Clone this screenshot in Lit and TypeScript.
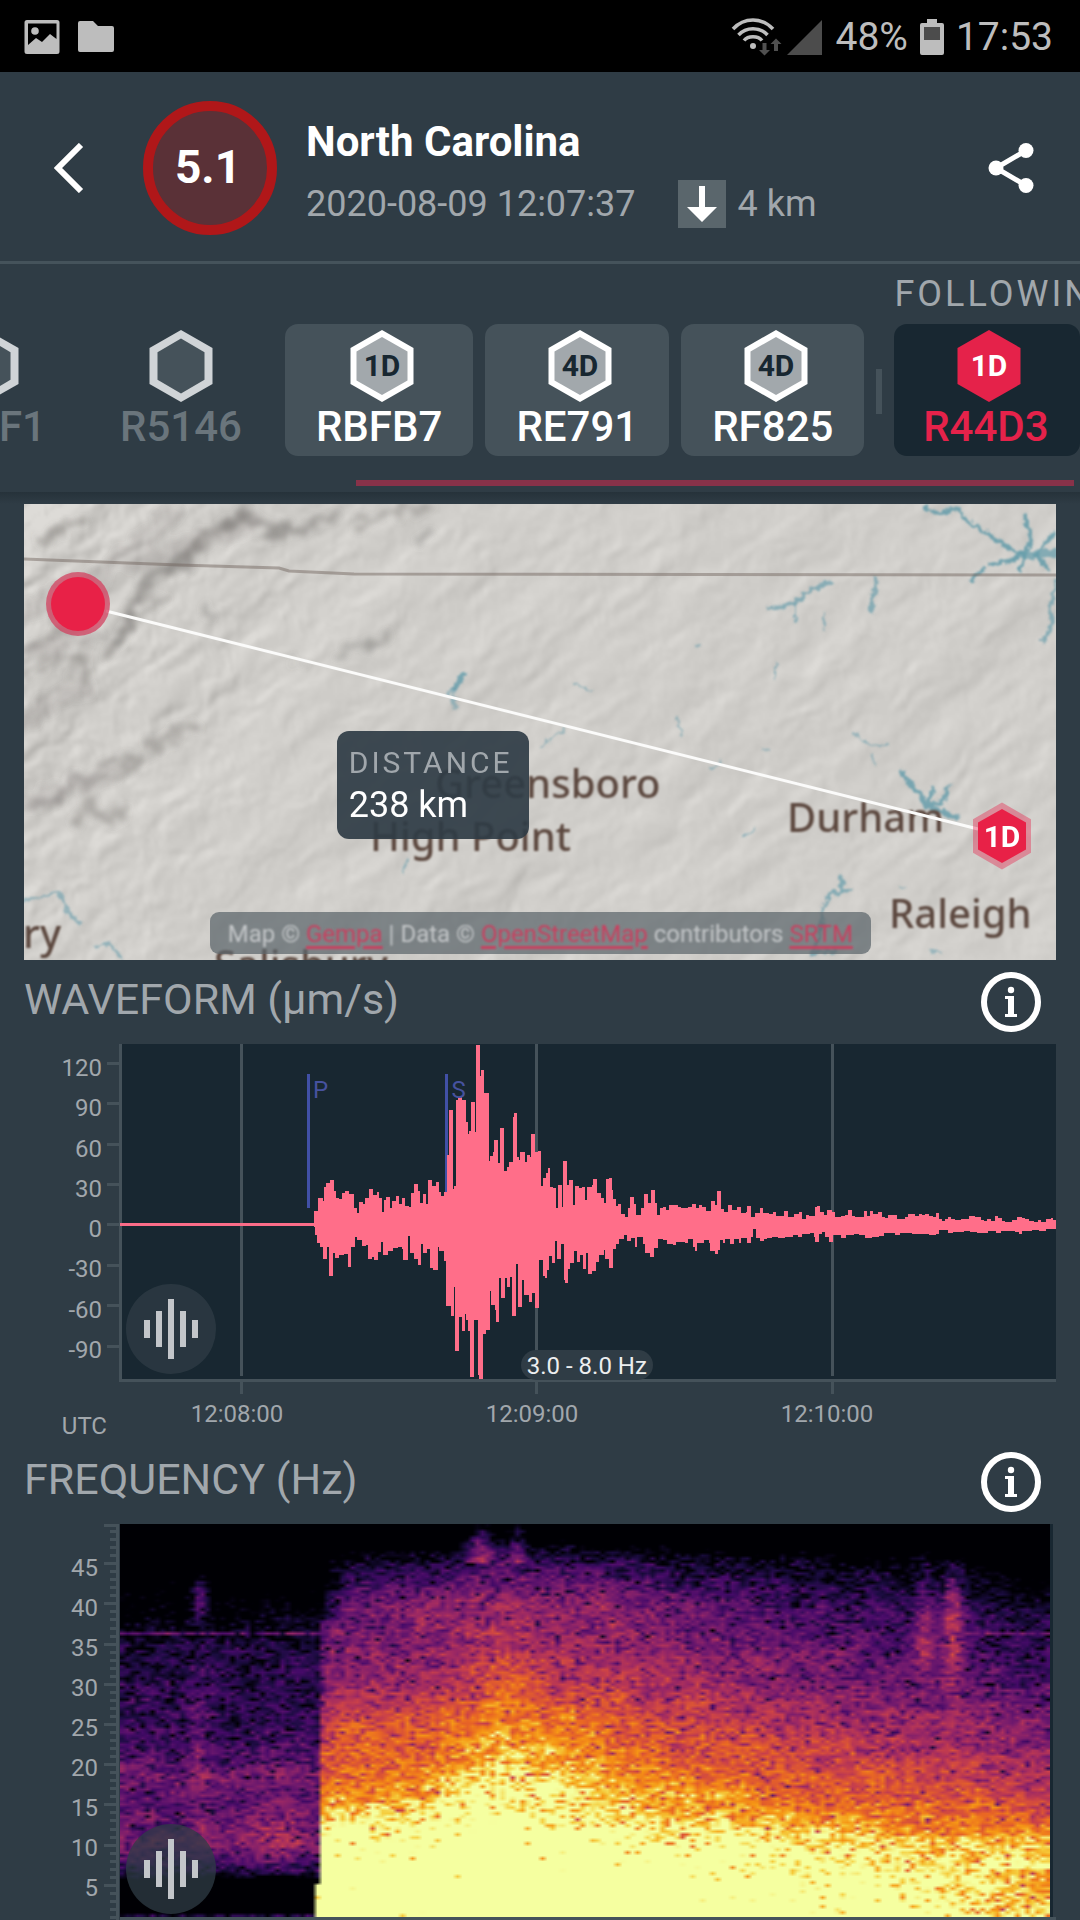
import { LitElement, html, svg, css } from "lit";
import { customElement } from "lit/decorators.js";

/* ---------- helpers ---------- */

const createRandom = (seed: number) => () => {
  seed = (seed + 0x6d2b79f5) | 0;
  let t = Math.imul(seed ^ (seed >>> 15), 1 | seed);
  t = (t + Math.imul(t ^ (t >>> 7), 61 | t)) ^ t;
  return ((t ^ (t >>> 14)) >>> 0) / 4294967296;
};

const hash = (x: number, y: number) => {
  let h = (Math.imul(x, 374761393) + Math.imul(y, 668265263)) | 0;
  h = Math.imul(h ^ (h >>> 13), 1274126177);
  return ((h ^ (h >>> 16)) >>> 0) / 4294967296;
};

const smoothNoise = (x: number, y: number) => {
  const xi = Math.floor(x);
  const yi = Math.floor(y);
  const fx = x - xi;
  const fy = y - yi;
  const ux = fx * fx * (3 - 2 * fx);
  const uy = fy * fy * (3 - 2 * fy);
  const a = hash(xi, yi);
  const b = hash(xi + 1, yi);
  const c = hash(xi, yi + 1);
  const d = hash(xi + 1, yi + 1);
  return (a + (b - a) * ux) * (1 - uy) + (c + (d - c) * ux) * uy;
};

const bump = (distance: number, width: number) => Math.exp(-((distance / width) ** 2));

const hexagon = (cx: number, cy: number, w: number, h: number) =>
  [
    [cx, cy - h / 2],
    [cx + w / 2, cy - h / 4],
    [cx + w / 2, cy + h / 4],
    [cx, cy + h / 2],
    [cx - w / 2, cy + h / 4],
    [cx - w / 2, cy - h / 4],
  ]
    .map((p) => p.join(","))
    .join(" ");

/* ---------- hill-shaded terrain ---------- */

@customElement("terrain-layer")
class TerrainLayer extends LitElement {
  static styles = css`
    :host {
      display: block;
    }
    .surface {
      display: block;
      width: 100%;
      height: 100%;
    }
  `;

  firstUpdated() {
    const canvas = this.renderRoot.querySelector("canvas")!;
    const { width: w, height: h } = canvas;
    const ctx = canvas.getContext("2d")!;
    const image = ctx.createImageData(w, h);
    const height = (x0: number, y0: number) => {
      const x = x0 + smoothNoise(x0 / 14 + 5, y0 / 14) * 5;
      const y = y0 + smoothNoise(x0 / 14, y0 / 14 + 31) * 5;
      const u = x * 0.8 - y * 0.6;
      const v = x * 0.6 + y * 0.8;
      return (
        smoothNoise(u / 70, v / 26) * 16 +
        smoothNoise(u / 30 + 3, v / 11 + 7) * 9 +
        smoothNoise(u / 14 + 43, v / 5 + 17) * 5 +
        smoothNoise(x / 5 + 80, y / 6) * 3.2 +
        smoothNoise(x / 2.6, y / 3 + 60) * 1.5
      );
    };
    for (let y = 0; y < h; y++) {
      for (let x = 0; x < w; x++) {
        const relief = 2.2 + 3.4 * Math.max(0, 1 - x / 200 - y / 500);
        const slope = height(x + 1, y + 1) - height(x - 1, y - 1);
        const shade = Math.max(-70, Math.min(13, slope * relief));
        const i = (y * w + x) * 4;
        image.data[i] = 208 + shade;
        image.data[i + 1] = 206 + shade;
        image.data[i + 2] = 202 + shade;
        image.data[i + 3] = 255;
      }
    }
    ctx.putImageData(image, 0, 0);
  }

  render() {
    return html`<canvas class="surface" width="516" height="228"></canvas>`;
  }
}

/* ---------- spectrogram ---------- */

const PALETTE: [number, number, number, number][] = [
  [0, 0, 0, 4],
  [0.13, 27, 12, 65],
  [0.25, 70, 10, 105],
  [0.38, 115, 27, 110],
  [0.5, 160, 42, 99],
  [0.63, 203, 65, 73],
  [0.75, 233, 102, 36],
  [0.86, 246, 150, 20],
  [0.94, 245, 205, 60],
  [1, 245, 255, 160],
];

const paint = (v: number) => {
  const value = Math.max(0, Math.min(1, v));
  let k = 1;
  while (PALETTE[k][0] < value) k++;
  const [p0, ...a] = PALETTE[k - 1];
  const [p1, ...b] = PALETTE[k];
  const t = (value - p0) / (p1 - p0);
  return a.map((c, i) => c + (b[i] - c) * t);
};

/* Signal level every 5 Hz from 0 to 50, at a position along the time axis. */
const QUIET = [-0.15, 0.0, 0.42, 0.34, 0.32, 0.21, 0.19, 0.12, -0.04, -0.22, -0.4];
const PROFILES: { at: number; levels: number[] }[] = [
  { at: 0.21, levels: [1.35, 1.3, 1.12, 0.91, 0.77, 0.68, 0.47, 0.4, 0.34, 0.12, -0.4] },
  { at: 0.32, levels: [1.35, 1.35, 1.16, 0.97, 0.82, 0.75, 0.52, 0.45, 0.43, 0.18, -0.4] },
  { at: 0.41, levels: [1.5, 1.45, 1.3, 1.12, 0.98, 0.89, 0.72, 0.57, 0.52, 0.28, -0.2] },
  { at: 0.52, levels: [1.5, 1.35, 1.16, 0.97, 0.87, 0.76, 0.6, 0.5, 0.44, 0.2, -0.4] },
  { at: 0.68, levels: [1.35, 1.2, 1.07, 0.85, 0.71, 0.62, 0.48, 0.39, 0.3, 0.08, -0.4] },
  { at: 0.84, levels: [1.25, 1.14, 0.98, 0.77, 0.62, 0.52, 0.38, 0.29, 0.2, -0.02, -0.4] },
  { at: 1, levels: [1.1, 1.06, 0.93, 0.67, 0.52, 0.42, 0.28, 0.18, 0.08, -0.12, -0.45] },
];

const sampleLevels = (levels: number[], hz: number) => {
  const k = Math.min(9, Math.floor(hz / 5));
  return levels[k] + (levels[k + 1] - levels[k]) * (hz / 5 - k);
};

@customElement("spectrogram-plot")
class SpectrogramPlot extends LitElement {
  static styles = css`
    :host {
      display: block;
    }
    .surface {
      display: block;
      width: 100%;
      height: 100%;
    }
  `;

  firstUpdated() {
    const canvas = this.renderRoot.querySelector("canvas")!;
    const { width: w, height: h } = canvas;
    const ctx = canvas.getContext("2d")!;
    const image = ctx.createImageData(w, h);
    const random = createRandom(51);
    for (let y = 0; y < h; y++) {
      const hz = 49.8 - (y / h) * 48.8;
      for (let x = 0; x < w; x++) {
        const t = x / w;
        const arrival = 0.209 + Math.min(0.006, Math.max(0, hz - 4) * 0.0005);
        let level: number;
        if (t < arrival) {
          level = sampleLevels(QUIET, hz);
          if (hz < 7) level -= (7 - hz) * 0.12;
          if (hz < 1.4) level = 0.15;
          level += 0.1 * bump(hz - 18.6, 0.9);
          if (hz > 10) level += 0.16 * bump(t - 0.083, 0.013) * bump(hz - 22, 9);
          level += 0.42 * bump(t - 0.083, 0.009) * bump(hz - 41, 2.6);
          if (hz > 6) level += 0.12 * bump(t - 0.165, 0.025) * bump(hz - 11, 8);
          if (Math.abs(hz - 36.3) < 0.2) level = 0.36;
        } else {
          let k = 0;
          while (k < PROFILES.length - 2 && PROFILES[k + 1].at < t) k++;
          const a = PROFILES[k];
          const b = PROFILES[k + 1];
          const mix = Math.max(0, (t - a.at) / (b.at - a.at));
          level =
            sampleLevels(a.levels, hz) * (1 - mix) + sampleLevels(b.levels, hz) * mix;
          if (t < arrival + 0.03 && hz > 38) level -= (arrival + 0.03 - t) * 8;
          if (t < arrival + 0.01 && hz > 12) level -= (arrival + 0.01 - t) * 10;
          if (hz > 45) level += 0.36 * bump(t - 0.385, 0.015);
          if (hz > 45) level += 0.26 * bump(t - 0.425, 0.008);
          level += 0.26 * bump(t - 0.863, 0.011) * bump(hz - 38, 8);
          level += 0.42 * bump(t - 0.893, 0.011) * bump(hz - 38, 8);
          if (t > 0.9 && Math.abs(hz - 36.3) < 0.2) level = 0.34;
          if (t > 0.78 && hz < 7) level -= (t - 0.78) * 0.6;
        }
        const speckle = Math.log(-Math.log(1 - random() * 0.999) + 0.002);
        const patch = smoothNoise(x / 5 + 11, y / 3) - 0.5;
        const v = level + Math.max(-6, speckle) * 0.07 + patch * 0.12;
        const rgb = paint(v);
        const i = (y * w + x) * 4;
        image.data[i] = rgb[0];
        image.data[i + 1] = rgb[1];
        image.data[i + 2] = rgb[2];
        image.data[i + 3] = 255;
      }
    }
    ctx.putImageData(image, 0, 0);
  }

  render() {
    return html`<canvas class="surface" width="186" height="131"></canvas>`;
  }
}

/* ---------- waveform ---------- */

/* Envelope traces: position, level pairs. Level 794 is the zero line. */
const UPPER_A = [
  880, 752, 891, 715, 903, 722, 908, 682, 914, 670, 925, 661, 935, 692, 942, 715, 950, 718, 958, 700,
  966, 693, 977, 702, 990, 745, 1000, 758, 1005, 726, 1016, 732, 1022, 714, 1034, 687, 1045, 704,
  1055, 696, 1061, 715, 1070, 755, 1075, 720, 1080, 712, 1091, 744, 1097, 724, 1108, 709, 1117, 731,
  1125, 714, 1134, 737, 1145, 741, 1152, 700, 1160, 673, 1169, 694, 1176, 728, 1184, 702, 1192, 731,
  1198, 661, 1210, 678, 1220, 667, 1230, 695, 1236, 708, 1243, 696, 1252, 585, 1258, 451, 1268, 687,
  1272, 678, 1277, 419, 1283, 411, 1294, 420, 1304, 485, 1310, 522, 1314, 513, 1320, 427, 1330, 516,
  1334, 256, 1344, 348, 1347, 331, 1355, 398, 1369, 602, 1372, 588, 1380, 576, 1384, 541, 1393, 609,
  1400, 505, 1411, 632, 1420, 622, 1426, 605, 1437, 472, 1440, 460, 1448, 590, 1453, 600, 1457, 577,
  1470, 606, 1475, 586, 1483, 590, 1488, 523, 1498, 576, 1506, 573, 1515, 678, 1520, 655, 1530, 640,
  1533, 625, 1540, 680, 1548, 685, 1557, 745, 1562, 677,
];
const LOWER_A = [
  880, 800, 883, 825, 888, 850, 897, 860, 905, 898, 915, 862, 921, 947, 932, 880, 938, 893, 950, 886,
  962, 883, 973, 922, 983, 860, 993, 832, 1000, 840, 1013, 858, 1025, 856, 1031, 896, 1041, 890,
  1047, 899, 1058, 877, 1067, 845, 1073, 884, 1085, 873, 1100, 864, 1115, 860, 1125, 868, 1128, 899,
  1142, 828, 1148, 880, 1158, 896, 1170, 914, 1179, 852, 1184, 880, 1196, 868, 1203, 923, 1212, 929,
  1225, 862, 1230, 872, 1243, 903, 1249, 1039, 1262, 1067, 1271, 982, 1275, 1172, 1285, 1070,
  1293, 1112, 1301, 1062, 1306, 1080, 1309, 1112, 1317, 1250, 1328, 1080, 1337, 1245, 1342, 1256,
  1352, 1122, 1360, 1110, 1372, 993, 1376, 1035, 1386, 1050, 1389, 1085, 1397, 955, 1404, 1013,
  1414, 955, 1420, 980, 1428, 950, 1434, 1067, 1445, 912, 1451, 1040, 1461, 960, 1468, 1005,
  1482, 1025, 1490, 998, 1497, 1043, 1510, 900, 1520, 948, 1525, 953, 1532, 930, 1537, 888,
  1545, 908, 1554, 842, 1560, 898,
];
const UPPER_B = [
  53, 676, 63, 742, 67, 604, 78, 676, 84, 661, 96, 735, 103, 679, 114, 684, 122, 681, 131, 720,
  136, 681, 152, 676, 155, 658, 166, 700, 178, 715, 186, 728, 193, 657, 208, 690, 212, 716, 221, 737,
  227, 733, 235, 763, 247, 772, 255, 745, 262, 712, 272, 733, 280, 766, 293, 745, 303, 702, 315, 730,
  322, 690, 333, 730, 340, 766, 349, 744, 375, 735, 385, 734, 400, 740, 430, 741, 442, 732, 453, 745,
  462, 735, 470, 742, 482, 754, 497, 724, 508, 736, 515, 693, 525, 748, 533, 757, 547, 735, 557, 750,
  573, 741, 583, 760, 597, 757, 602, 739, 613, 770, 625, 760, 638, 744, 648, 758, 665, 763, 677, 757,
  685, 768, 708, 753, 720, 770, 738, 763, 753, 757, 762, 778, 772, 765, 800, 742, 805, 738, 813, 757,
  825, 766, 833, 750, 847, 756, 858, 770, 885, 765, 895, 751, 905, 767, 925, 770, 940, 754, 950, 767,
  957, 753, 967, 762, 983, 756, 993, 770, 1010, 766, 1027, 765, 1037, 778, 1060, 770, 1070, 763,
  1090, 768, 1102, 762, 1130, 767, 1140, 771, 1150, 760, 1160, 777, 1185, 770, 1205, 780, 1240, 778,
  1247, 768, 1275, 772, 1280, 780, 1310, 782, 1320, 767, 1341, 782, 1370, 780, 1385, 772, 1400, 774,
  1420, 782, 1435, 786, 1445, 779, 1470, 778, 1483, 775, 1490, 780, 1498, 780,
];
const LOWER_B = [
  53, 898, 60, 852, 70, 960, 72, 968, 80, 928, 88, 910, 98, 873, 106, 905, 116, 885, 125, 927,
  135, 880, 140, 941, 152, 932, 163, 905, 172, 885, 185, 870, 190, 897, 201, 925, 212, 868, 220, 852,
  230, 838, 243, 826, 253, 843, 265, 835, 275, 862, 283, 830, 298, 853, 305, 878, 320, 890, 330, 863,
  343, 836, 358, 840, 370, 852, 385, 855, 395, 845, 420, 848, 430, 836, 443, 860, 450, 872, 457, 848,
  475, 840, 490, 850, 495, 873, 508, 881, 518, 870, 523, 840, 530, 850, 538, 838, 553, 853, 563, 838,
  577, 849, 585, 835, 600, 848, 612, 830, 618, 808, 628, 835, 640, 842, 650, 838, 660, 835, 675, 830,
  690, 835, 712, 830, 735, 825, 750, 832, 762, 822, 785, 820, 797, 830, 800, 846, 810, 822, 820, 815,
  828, 830, 838, 846, 850, 824, 875, 833, 890, 825, 912, 822, 925, 826, 945, 833, 965, 832, 985, 828,
  1000, 820, 1030, 825, 1045, 820, 1080, 823, 1110, 822, 1130, 825, 1150, 823, 1160, 810, 1185, 820,
  1200, 815, 1230, 812, 1250, 815, 1270, 818, 1300, 812, 1325, 820, 1340, 813, 1380, 815, 1390, 822,
  1400, 813, 1430, 810, 1450, 812, 1470, 808, 1498, 808,
];

/* The traces use two time bases; both map to the plot's own units. */
const toPlot = (early: number[], late: number[]) => {
  const points: [number, number][] = [];
  for (let i = 0; i < early.length; i += 2)
    points.push([Math.round(early[i] / 2.8) - 107, Math.round(early[i + 1] / 3) - 84]);
  for (let i = 0; i < late.length; i += 2)
    points.push([Math.round(late[i] / 2.904) + 433, Math.round(late[i + 1] / 3) - 84]);
  return points;
};

const wavePath = () => {
  const upper = toPlot(UPPER_A, UPPER_B);
  const lower = toPlot(LOWER_A, LOWER_B);
  const jitter = createRandom(7);
  let d = `M207 181`;
  let x = 207;
  for (let i = 0; i < upper.length; i++) {
    const [px, py] = upper[i];
    const end = i + 1 < upper.length ? upper[i + 1][0] : 949;
    x = px;
    d += `H${x}V${py}`;
    while (end - x > 5) {
      x += 3;
      d += `H${x}V${py + Math.round(jitter() * 3) - 1}`;
    }
  }
  d += `H949`;
  for (let i = lower.length - 1; i >= 0; i--) d += `V${lower[i][1]}H${lower[i][0]}`;
  return d + "Z";
};

/* ---------- icons ---------- */

const infoIcon = html`
  <svg class="info-icon" viewBox="0 0 60 60" aria-hidden="true">
    <circle cx="30" cy="30" r="27" fill="none" stroke="#fff" stroke-width="6" />
    <circle cx="30" cy="18" r="3.2" fill="#fff" />
    <path d="M24 24h9v18h3v3H24v-3h3V27h-3z" fill="#fff" />
  </svg>
`;

const soundIcon = html`
  <svg class="sound-icon" viewBox="0 0 90 90" aria-hidden="true">
    <path d="M18 36h6v18h-6zM30 27h6v36h-6zM42 15h6v60h-6zM54 27h6v36h-6zM66 36h6v18h-6z" fill="#c3c6ca" />
  </svg>
`;

/* ---------- page ---------- */

type Station = { code: string; badge: string; tone: string };

const STATIONS: Station[] = [
  { code: "F1", badge: "", tone: "idle cut" },
  { code: "R5146", badge: "", tone: "idle" },
  { code: "RBFB7", badge: "1D", tone: "online" },
  { code: "RE791", badge: "4D", tone: "online" },
  { code: "RF825", badge: "4D", tone: "online" },
];

const SPEEDS = [120, 90, 60, 30, 0, -30, -60, -90];
const SPEED_TICKS = [19, 59, 100, 140, 180, 221, 261, 302];
const FREQUENCIES = [45, 40, 35, 30, 25, 20, 15, 10, 5];

@customElement("app-root")
class AppRoot extends LitElement {
  static styles = css`
    :host {
      display: block;
      background: #2f3c45;
      color: #fff;
      font-family: Roboto, "Liberation Sans", sans-serif;
      font-size: 24px;
      line-height: 28px;
      overflow: hidden;
    }
    * {
      box-sizing: border-box;
    }
    button {
      margin: 0;
      padding: 0;
      border: 0;
      background: none;
      color: inherit;
      font: inherit;
      cursor: pointer;
      flex: none;
    }
    svg {
      display: block;
    }
    h1,
    h2,
    p {
      margin: 0;
      font-weight: 400;
    }

    .status {
      display: flex;
      align-items: center;
      height: 72px;
      padding: 2px 27px 0 24px;
      background: #000;
      color: #bdbdbd;
      font-size: 39px;
      line-height: 70px;
    }
    .notices {
      display: flex;
      gap: 18px;
      flex: 1;
    }
    .notices svg {
      width: 36px;
      height: 36px;
    }
    .radio {
      width: 92px;
      height: 40px;
      margin-right: 12px;
    }
    .battery {
      width: 24px;
      height: 36px;
      margin: 0 12px;
    }

    .header {
      display: flex;
      align-items: center;
      height: 192px;
      padding: 2px 45px 0 54px;
      border-bottom: 3px solid #45535b;
    }
    .back-icon {
      width: 30px;
      height: 50px;
    }
    .magnitude {
      display: flex;
      align-items: center;
      justify-content: center;
      flex: none;
      width: 134px;
      height: 134px;
      margin: 0 29px 0 59px;
      padding: 0 4px 2px 0;
      border: 10px solid #b01719;
      border-radius: 50%;
      background: #5a3137;
      font-size: 46px;
      font-weight: 700;
    }
    .summary {
      flex: 1;
      padding-top: 13px;
    }
    .place {
      font-size: 42px;
      font-weight: 700;
      line-height: 60px;
    }
    .details {
      display: flex;
      align-items: center;
      color: #a1a7ac;
      font-size: 36px;
      line-height: 64px;
    }
    .depth-icon {
      width: 48px;
      height: 48px;
      margin: 0 12px 0 42px;
    }
    .share-icon {
      width: 48px;
      height: 52px;
    }

    .stations {
      height: 228px;
      overflow: hidden;
    }
    .track {
      display: flex;
      align-items: flex-end;
      gap: 12px;
      height: 192px;
      margin-left: -103px;
    }
    .station {
      display: flex;
      flex-direction: column;
      align-items: center;
      height: 132px;
      padding: 6px 31px 0;
      border-radius: 13px;
      font-size: 42px;
      font-weight: 500;
      line-height: 50px;
    }
    .station svg {
      width: 70px;
      height: 72px;
    }
    .idle {
      color: #6a757c;
    }
    .cut {
      width: 180px;
    }
    .cut .code {
      align-self: flex-end;
    }
    .online {
      background: #45525a;
    }
    .followed {
      background: #182731;
      color: #e5224a;
    }
    .divider {
      flex: none;
      width: 6px;
      height: 45px;
      margin-bottom: 42px;
      background: #45525a;
    }
    .group {
      flex: none;
      width: 186px;
    }
    .group .station {
      width: 100%;
      padding: 6px 3px 0 0;
    }
    .group-title {
      color: #a1a7ac;
      font-size: 36px;
      line-height: 60px;
      letter-spacing: 3px;
      white-space: nowrap;
    }
    .scrollbar {
      height: 6px;
      margin: 24px 6px 0 33%;
      background: #883249;
    }

    .map-area {
      padding: 12px 24px 0;
      background: linear-gradient(#26323a, #2f3c45 12px);
    }
    .map {
      position: relative;
      height: 456px;
      overflow: hidden;
    }
    .terrain,
    .features {
      position: absolute;
      inset: 0;
      width: 100%;
      height: 100%;
    }
    .town {
      fill: #5c483f;
      font-family: "Noto Sans", "Open Sans", sans-serif;
      font-size: 40px;
      font-weight: 500;
      filter: blur(1px);
    }
    .pin {
      fill: #fff;
      font-size: 30px;
      font-weight: 700;
    }
    .distance {
      position: absolute;
      left: 30.3%;
      top: 227px;
      padding: 10px 16px 12px 12px;
      border-radius: 12px;
      background: rgba(47, 60, 69, 0.92);
      font-size: 36px;
      line-height: 43px;
    }
    .distance-title {
      color: #a1a7ac;
      font-size: 30px;
      letter-spacing: 3px;
    }
    .credits {
      position: absolute;
      left: 18%;
      bottom: 6px;
      padding: 2px 18px 0;
      border-radius: 9px;
      background: rgba(92, 101, 107, 0.72);
      color: #c3c6c8;
      font-size: 24px;
      line-height: 40px;
      white-space: nowrap;
    }
    .credits-text {
      filter: blur(1px);
    }
    .credits a {
      color: #c9405f;
      text-decoration: underline;
      text-decoration-thickness: 3px;
      text-underline-offset: 4px;
    }

    .heading {
      display: flex;
      align-items: center;
      justify-content: space-between;
      height: 84px;
      padding: 0 39px 0 24px;
      color: #a1a7ac;
    }
    .heading-title {
      padding-bottom: 7px;
      font-size: 43px;
      line-height: 50px;
    }
    .info-icon {
      width: 60px;
      height: 60px;
    }

    .chart {
      display: flex;
      padding: 0 24px;
      color: #a1a7ac;
    }
    .scale {
      display: flex;
      flex-direction: column;
      justify-content: space-between;
      flex: none;
      text-align: right;
    }
    .speed-scale {
      width: 83px;
      height: 310px;
      margin-top: 10px;
      padding-right: 5px;
    }
    .plot {
      position: relative;
      flex: 1;
      height: 350px;
    }
    .wave {
      width: 100%;
      height: 100%;
    }
    .phase {
      position: absolute;
      top: 32px;
      color: #46529f;
    }
    .phase-p {
      left: 21.7%;
    }
    .phase-s {
      left: 36.3%;
    }
    .band {
      position: absolute;
      left: 43.6%;
      top: 306px;
      padding: 2px 6px 0;
      border-radius: 15px;
      background: #2f3c45;
      color: #eceeef;
    }
    .sound {
      position: absolute;
      bottom: 20px;
      left: 19px;
      width: 90px;
      height: 90px;
      border-radius: 50%;
      background: rgba(47, 60, 69, 0.75);
    }
    .sound-low {
      bottom: 3px;
      left: 6px;
    }
    .times {
      display: grid;
      grid-template-columns: 83px 260fr 330fr 260fr 99fr;
      height: 46px;
      padding: 6px 24px 0;
      color: #a1a7ac;
      text-align: center;
    }
    .zone {
      padding-top: 12px;
      text-align: right;
    }

    .hz-scale {
      width: 80px;
      height: 348px;
      margin-top: 30px;
      padding-right: 6px;
    }
    .ruler {
      flex: none;
      width: 16px;
      height: 396px;
    }
    .spectrum {
      position: relative;
      flex: 1;
      height: 396px;
      padding-right: 3px;
      border-bottom: 3px solid #45535b;
    }
    .spectrum-plot {
      height: 393px;
      border-right: 3px solid #182731;
    }
  `;

  private renderStation(station: Station) {
    const offset = station.badge ? 38 : 35;
    return html`
      <button class="station ${station.tone}">
        <svg viewBox="0 0 70 72" aria-hidden="true">
          ${station.tone === "followed"
            ? svg`<polygon points=${hexagon(offset, 36, 63, 72)} fill="#e5224a" />`
            : svg`
              <polygon points=${hexagon(offset, 36, 63, 72)} fill=${station.badge ? "#fff" : "#d0d4d7"} />
              <polygon points=${hexagon(offset, 36, station.badge ? 51 : 47, station.badge ? 58 : 55)}
                fill=${station.badge ? "#a2a8ac" : "#45525a"} />`}
          <text x=${offset} y="46" text-anchor="middle" font-size="30" font-weight="700"
            fill=${station.tone === "followed" ? "#fff" : "#182731"}>${station.badge}</text>
        </svg>
        <span class="code">${station.code}</span>
      </button>
    `;
  }

  private renderMap() {
    return html`
      <div class="map">
        <terrain-layer class="terrain"></terrain-layer>
        <svg class="features" viewBox="0 0 1032 456" preserveAspectRatio="xMidYMid slice">
          <defs>
            <filter id="soft" x="-20%" y="-20%" width="140%" height="140%">
              <feTurbulence type="fractalNoise" baseFrequency="0.07" numOctaves="3" seed="4" />
              <feDisplacementMap in="SourceGraphic" scale="26" xChannelSelector="R" yChannelSelector="G" />
              <feGaussianBlur stdDeviation="3" />
            </filter>
            <filter id="damp" x="-20%" y="-20%" width="140%" height="140%">
              <feTurbulence type="fractalNoise" baseFrequency="0.16" numOctaves="2" seed="9" />
              <feDisplacementMap in="SourceGraphic" scale="9" xChannelSelector="R" yChannelSelector="G" />
              <feGaussianBlur stdDeviation="1.2" />
            </filter>
          </defs>
          <g fill="none" stroke="#696663" stroke-linecap="round" stroke-linejoin="round" filter="url(#soft)">
            <path stroke-width="8" opacity=".5"
              d="M94 139L112 96L130 68L155 63L176 36L190 22L222 16L248 26L272 29L290 18L308 14" />
            <path stroke-width="8" opacity=".35"
              d="M12 36L40 24L56 18M330 22L369 8L400 2M2 146L40 128L66 112M0 170L34 150M45 168L60 150L62 172M94 139L80 152M112 96L140 92" />
            <path stroke-width="6" opacity=".4" d="M316 150L333 139L346 141L368 134M276 160L280 162M180 105L186 110M394 38L406 30" />
            <path stroke-width="10" opacity=".35"
              d="M5 302L30 296L47 280L74 270L84 258L119 255M128 244L150 230L170 219M50 316L66 300L90 318L104 308" />
            <path stroke-width="18" opacity=".16" d="M0 110L80 70L150 10M0 215L60 180M0 300L90 270M110 60L230 20M0 150L70 130" />
          </g>
          <g fill="none" stroke="#689dab" stroke-linecap="round" stroke-linejoin="round" filter="url(#damp)">
            <path stroke-width="4" opacity=".9"
              d="M900 4L912 9L934 5L943 17L964 30L981 42L998 50M1001 13L1008 36L1000 50M1030 30L1014 48M967 60L984 57L1000 51M1002 50L996 66M1012 50L1024 66M948 75L960 66" />
            <path stroke-width="8" opacity=".75" d="M994 52L1034 49" />
            <path stroke-width="4" opacity=".7"
              d="M1033 76L1030 90L1026 103L1029 119L1020 136M745 105L771 99L786 87L805 79M852 74L853 84L848 92L848 109" />
            <path stroke-width="2" opacity=".6"
              d="M771 99V120M800 110V124M752 157V174M654 214L658 233M550 180L568 187M516 244L540 225M688 265L697 258M847 251L852 261M719 334L731 324M673 141L675 142M740 244L744 248M830 230L846 242L864 240M378 368L384 355M905 446L917 449M876 383L878 384" />
            <path stroke-width="5" opacity=".85" d="M440 170L430 184M878 268L886 280L896 290L902 303L909 286M902 303L919 297L924 283M906 303L933 314" />
            <path stroke-width="3" opacity=".6" d="M430 184V204M430 184L422 190M1 397L35 388L44 409L56 419M72 443L87 439L97 455" />
            <path stroke-width="4" opacity=".75" d="M816 373L819 387L807 390L798 406L797 430L788 449M788 449L812 446M819 387L824 386" />
          </g>
          <path d="M0 55L155 61L255 64L265 67L330 70L1032 71" fill="none" stroke="#6d5f59" stroke-width="3" opacity=".45" />
          <g class="town">
            <text x="411" y="294">Greensboro</text>
            <text x="346" y="347">High Point</text>
            <text x="763" y="328">Durham</text>
            <text x="865" y="424">Raleigh</text>
            <text x="-1" y="444">ry</text>
            <text x="190" y="475">Salisbury</text>
          </g>
          <path d="M82 107L954 325" stroke="#fbfbfa" stroke-width="3" />
          <circle cx="54" cy="100" r="32" fill="#d1405f" opacity=".75" />
          <circle cx="54" cy="100" r="27" fill="#e82147" />
          <polygon points=${hexagon(978, 332, 58, 67)} fill="#e5224a" opacity=".4" />
          <polygon points=${hexagon(978, 332, 48, 54)} fill="#e82147" />
          <text class="pin" x="978" y="343" text-anchor="middle">1D</text>
        </svg>
        <div class="distance">
          <p class="distance-title">DISTANCE</p>
          <p>238 km</p>
        </div>
        <div class="credits">
          <p class="credits-text">Map © <a href="#gempa">Gempa</a> | Data © <a href="#osm">OpenStreetMap</a> contributors <a href="#srtm">SRTM</a></p>
        </div>
      </div>
    `;
  }

  private renderWaveform() {
    return html`
      <div class="chart">
        <div class="scale speed-scale">${SPEEDS.map((v) => html`<span>${v}</span>`)}</div>
        <div class="plot">
          <svg class="wave" viewBox="0 0 949 350" preserveAspectRatio="none" shape-rendering="crispEdges" aria-hidden="true">
            <rect x="15" width="934" height="335" fill="#182731" />
            <g fill="#45525a">
              ${[133, 428, 724].map((x) => svg`<rect x=${x} width="3" height="332" /><rect x=${x} y="338" width="3" height="12" />`)}
              ${SPEED_TICKS.map((y) => svg`<rect y=${y - 1} width="12" height="3" />`)}
              <rect x="12" width="3" height="338" />
              <rect x="12" y="335" width="937" height="3" />
            </g>
            <path d="M200 30h3v134h-3zM338 30h3v134h-3z" fill="#4150a6" />
            <rect x="13" y="179" width="195" height="3" fill="#fb6c88" />
            <path d=${wavePath()} fill="#ff6e89" />
          </svg>
          <span class="phase phase-p">P</span>
          <span class="phase phase-s">S</span>
          <span class="band">3.0 - 8.0 Hz</span>
          <button class="sound" aria-label="Play waveform">${soundIcon}</button>
        </div>
      </div>
      <div class="times">
        <span class="zone">UTC</span>
        <span>12:08:00</span>
        <span>12:09:00</span>
        <span>12:10:00</span>
      </div>
    `;
  }

  private renderSpectrogram() {
    const minor = Array.from({ length: 50 }, (_, i) => i);
    return html`
      <div class="chart">
        <div class="scale hz-scale">${FREQUENCIES.map((v) => html`<span>${v}</span>`)}</div>
        <svg class="ruler" viewBox="0 0 16 396" shape-rendering="crispEdges" aria-hidden="true">
          <g fill="#45525a">
            <rect x="12" width="3" height="396" />
            ${minor.map((i) => {
              const major = i % 5 === 0;
              return svg`<rect x=${major ? 0 : 6} y=${Math.round(i * 8.04) - (i ? 2 : 0)} width=${major ? 12 : 6} height="3" />`;
            })}
          </g>
        </svg>
        <div class="spectrum">
          <spectrogram-plot class="spectrum-plot"></spectrogram-plot>
          <button class="sound sound-low" aria-label="Play spectrogram">${soundIcon}</button>
        </div>
      </div>
    `;
  }

  render() {
    return html`
      <div class="status">
        <div class="notices">
          <svg viewBox="0 0 36 36" aria-hidden="true">
            <path fill="#bdbdbd" fill-rule="evenodd"
              d="M3 1h30a2.500 2.500 0 0 1 2.500 2.500v29a2.500 2.500 0 0 1-2.500 2.500H3a2.500 2.500 0 0 1-2.500-2.500v-29A2.500 2.500 0 0 1 3 1zM4 4.500V26l8-7 6 4 8-8 6.500 5V4.500z" />
            <circle cx="11" cy="12" r="3.800" fill="#bdbdbd" />
          </svg>
          <svg viewBox="0 0 36 36" aria-hidden="true">
            <path d="M2 2h13l5 5h14a2 2 0 0 1 2 2v22a2 2 0 0 1-2 2H2a2 2 0 0 1-2-2V4a2 2 0 0 1 2-2z" fill="#bdbdbd" />
          </svg>
        </div>
        <svg class="radio" viewBox="0 0 92 40" aria-hidden="true">
          <g fill="none" stroke="#bdbdbd" stroke-width="3.500">
            <path d="M2 12C13 0 31 0 42 12M7.500 18C15 9.500 29 9.500 36.500 18M13 23.500c4-5 14-5 18 0" />
          </g>
          <circle cx="22" cy="29" r="3" fill="#bdbdbd" />
          <path d="M31.500 26h4v7h3.500l-5.500 5.500L28 33h3.500zM43 34V27h-3.500l5.500-5.500L50.500 27H47v7z" fill="#505050" />
          <path d="M56 38L91 3V38z" fill="#4c4c4c" />
        </svg>
        <span>48%</span>
        <svg class="battery" viewBox="0 0 24 36" aria-hidden="true">
          <path d="M7 0h10v4h5a2 2 0 0 1 2 2v28a2 2 0 0 1-2 2H2a2 2 0 0 1-2-2V6a2 2 0 0 1 2-2h5z" fill="#bdbdbd" />
          <path d="M4 8h16v13H4z" fill="#4c4c4c" />
        </svg>
        <span>17:53</span>
      </div>

      <header class="header">
        <button aria-label="Back">
          <svg class="back-icon" viewBox="0 0 30 50" aria-hidden="true">
            <path d="M27 2L4 25L27 48" fill="none" stroke="#fff" stroke-width="6" />
          </svg>
        </button>
        <div class="magnitude">5.1</div>
        <div class="summary">
          <h1 class="place">North Carolina</h1>
          <p class="details">
            <span>2020-08-09 12:07:37</span>
            <svg class="depth-icon" viewBox="0 0 48 48" aria-hidden="true">
              <rect width="48" height="48" fill="#5a666c" />
              <path d="M21 6h6v21h12L24 42L9 27h12z" fill="#fff" />
            </svg>
            <span>4 km</span>
          </p>
        </div>
        <button aria-label="Share">
          <svg class="share-icon" viewBox="0 0 48 52" aria-hidden="true">
            <path d="M39 8.500L9 26L39 43.500" fill="none" stroke="#fff" stroke-width="5" />
            <g fill="#fff">
              <circle cx="39" cy="8.500" r="7.500" />
              <circle cx="9" cy="26" r="7.500" />
              <circle cx="39" cy="43.500" r="7.500" />
            </g>
          </svg>
        </button>
      </header>

      <nav class="stations">
        <div class="track">
          ${STATIONS.map((s) => this.renderStation(s))}
          <div class="divider"></div>
          <div class="group">
            <p class="group-title">FOLLOWING</p>
            ${this.renderStation({ code: "R44D3", badge: "1D", tone: "followed" })}
          </div>
        </div>
        <div class="scrollbar"></div>
      </nav>

      <main>
        <section class="map-area">${this.renderMap()}</section>
        <section>
          <div class="heading">
            <h2 class="heading-title">WAVEFORM (µm/s)</h2>
            <button aria-label="About the waveform">${infoIcon}</button>
          </div>
          ${this.renderWaveform()}
        </section>
        <section>
          <div class="heading">
            <h2 class="heading-title">FREQUENCY (Hz)</h2>
            <button aria-label="About the spectrogram">${infoIcon}</button>
          </div>
          ${this.renderSpectrogram()}
        </section>
      </main>
    `;
  }
}
